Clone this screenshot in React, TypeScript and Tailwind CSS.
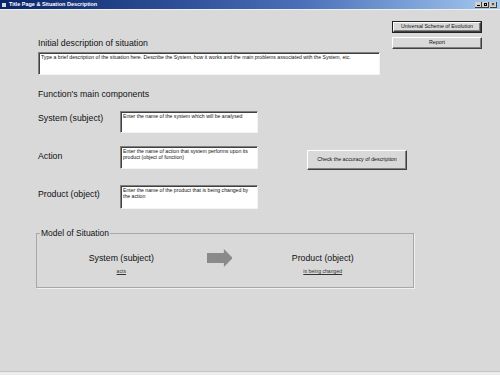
import React from "react";

const font = { fontFamily: '"Liberation Sans", Arial, sans-serif' };

function Sunken({ children, className }: { children?: React.ReactNode; className: string }) {
  return (
    <div
      className={`bg-white border-t border-l border-t-[#808080] border-l-[#808080] border-b border-r border-b-[#f4f4f4] border-r-[#f4f4f4] shadow-[inset_1px_1px_0_#404040] px-[2px] pt-[1px] text-[5.15px] leading-[6px] text-[#111] ${className}`}
    >
      {children}
    </div>
  );
}

function Btn({ children, className, def }: { children: React.ReactNode; className: string; def?: boolean }) {
  return (
    <div className={`${def ? "border border-[#222]" : ""} ${className}`}>
      <div className="h-full w-full border-t border-l border-t-white border-l-white border-b border-r border-b-[#404040] border-r-[#404040] shadow-[inset_-1px_-1px_0_#808080] bg-[#d9d9d9] flex items-center justify-center text-[5.3px] text-[#111]">
        {children}
      </div>
    </div>
  );
}

export default function App() {
  return (
    <div className="w-[500px] h-[375px] bg-[#d9d9d9] flex flex-col overflow-hidden" style={font}>
      {/* title bar */}
      <div className="h-[9px] flex items-center bg-gradient-to-r from-[#0a246a] via-[#4a6fb8] via-60% to-[#a6caf0] pl-[2px] pr-[3px]">
        <div className="w-[4px] h-[4px] bg-[#d8d8d8] mr-[3px]" />
        <span className="text-white font-bold text-[5.5px] leading-none">Title Page &amp; Situation Description</span>
        <div className="ml-auto flex gap-[0px]">
          <div className="w-[7px] h-[6px] bg-[#d4d0c8] border-r border-b border-[#404040] flex items-end justify-center pb-[1px]">
            <div className="w-[3px] h-[1px] bg-black" />
          </div>
          <div className="w-[7px] h-[6px] bg-[#d4d0c8] border-r border-b border-[#404040] flex items-center justify-center">
            <div className="w-[3px] h-[3px] border border-black" />
          </div>
          <div className="w-[7px] h-[6px] bg-[#d4d0c8] border-r border-b border-[#404040] ml-[1px] flex items-center justify-center text-[5px] leading-none font-bold text-black">
            ×
          </div>
        </div>
      </div>
      <div className="h-[1px] bg-[#f0f0f0]" />

      <div className="flex-1 flex flex-col pl-[38px]">
        {/* top row */}
        <div className="flex pt-[11px]">
          <div className="w-[342px] flex flex-col pt-[17px]">
            <div className="text-[8.75px] leading-[10px] text-[#111]">Initial description of situation</div>
            <Sunken className="mt-[4px] h-[23px] w-[342px]">
              Type a brief description of the situation here. Describe the System, how it works and the main problems associated with the System, etc.
            </Sunken>
          </div>
          <div className="ml-[12px] flex flex-col gap-[4px]">
            <Btn def className="w-[90px] h-[12px]">Universal Scheme of Evolution</Btn>
            <Btn className="w-[90px] h-[12px]">Report</Btn>
          </div>
        </div>

        <div className="mt-[14px] text-[8.75px] leading-[10px] text-[#111]">Function's main components</div>

        <div className="mt-[12px] flex items-start">
          <div className="w-[82px] pt-[2px] text-[8.75px] leading-[10px] text-[#111]">System (subject)</div>
          <Sunken className="w-[138px] h-[22px]">Enter the name of the system which will be analysed</Sunken>
        </div>

        <div className="mt-[13px] flex items-start">
          <div className="w-[82px] pt-[5px] text-[8.75px] leading-[10px] text-[#111]">Action</div>
          <Sunken className="w-[138px] h-[23px]">
            Enter the name of action that system performs upon its product (object of function)
          </Sunken>
          <Btn className="ml-[49px] mt-[4px] w-[100px] h-[20px]">Check the accuracy of description</Btn>
        </div>

        <div className="mt-[15px] flex items-start">
          <div className="w-[82px] pt-[4px] text-[8.75px] leading-[10px] text-[#111]">Product (object)</div>
          <Sunken className="w-[138px] h-[24px]">Enter the name of the product that is being changed by the action</Sunken>
        </div>

        {/* model of situation */}
        <div className="mt-[24px] -ml-[2px] w-[378px] h-[55px] border border-[#a8a8a8] shadow-[1px_1px_0_#f0f0f0] flex flex-col">
          <div className="-mt-[5px] ml-[3px] self-start bg-[#d9d9d9] px-[1px] text-[8.5px] leading-[9px] text-[#111]">Model of Situation</div>
          <div className="flex items-start mt-[15px]">
            <div className="w-[170px] flex flex-col items-center">
              <div className="text-[8.75px] leading-[10px] text-[#111]">System (subject)</div>
              <div className="mt-[5px] text-[5.15px] leading-[6px] text-[#333] underline">acts</div>
            </div>
            <svg width="26" height="18" viewBox="0 0 26 18" className="mt-[-4px] ml-[1px]">
              <polygon points="0,4 17,4 17,0 26,9 17,18 17,14 0,14" fill="#8a8a8a" />
            </svg>
            <div className="w-[182px] flex flex-col items-center">
              <div className="text-[8.75px] leading-[10px] text-[#111]">Product (object)</div>
              <div className="mt-[5px] text-[5.15px] leading-[6px] text-[#333] underline">is being changed</div>
            </div>
          </div>
        </div>

        <div className="flex-1" />
      </div>
      <div className="h-[1px] bg-[#c4c4c4]" />
      <div className="h-[3px] bg-[#ececec]" />
    </div>
  );
}
